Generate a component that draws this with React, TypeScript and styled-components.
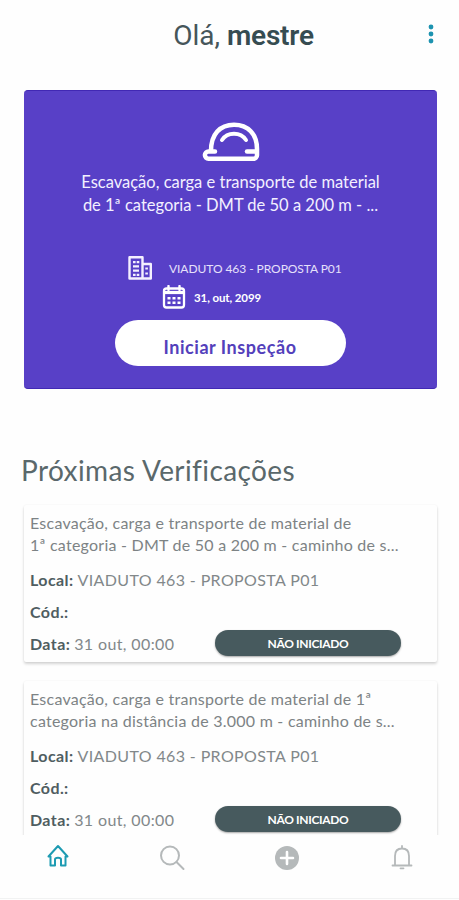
import React from "react";
import styled, { createGlobalStyle } from "styled-components";

const GlobalStyle = createGlobalStyle`
  * { box-sizing: border-box; }
  body { margin: 0; background: #fefefe; font-family: Lato, "Open Sans", sans-serif; }
`;

const Screen = styled.div`
  display: flex;
  flex-direction: column;
  width: 459px;
  height: 900px;
  overflow: hidden;
  background: #fefefe;
`;

const Header = styled.header`
  display: grid;
  grid-template-columns: 56px 1fr 56px;
  align-items: center;
  height: 90px;
  flex: none;
  padding-bottom: 22px;
`;

const Greeting = styled.h1`
  grid-column: 2;
  margin: 0;
  padding: 3px 0 0 28px;
  text-align: center;
  font: 400 28px/34px Roboto, sans-serif;
  color: #46565a;
  strong { font-weight: 600; color: #364c51; letter-spacing: -0.2px; }
`;

const MenuButton = styled.button`
  justify-self: center;
  display: flex;
  padding: 0;
  border: 0;
  background: none;
  svg { display: block; }
`;

const Hero = styled.section`
  display: flex;
  flex-direction: column;
  align-items: center;
  flex: none;
  height: 299px;
  margin: 0 22px 0 24px;
  padding-top: 31px;
  border-radius: 4px;
  background: #5840c7;
  border-top: 1px solid #4128b4;
  border-bottom: 1px solid #4128b4;
  color: #fff;
`;

const HeroText = styled.p`
  margin: 9px 0 0;
  text-align: center;
  font-size: 16.5px;
  line-height: 23px;
  color: #f3f0ff;
  white-space: pre;
`;

const MetaRow = styled.div<{ $left: number; $top: number; $gap: number }>`
  display: flex;
  align-items: center;
  align-self: flex-start;
  height: 24px;
  gap: ${(p) => p.$gap}px;
  margin: ${(p) => p.$top}px 0 0 ${(p) => p.$left}px;
`;

const Place = styled.span`
  font-size: 12px;
  letter-spacing: -0.06px;
  color: #e6e0fb;
`;

const DateText = styled.strong`
  font-size: 11.5px;
  letter-spacing: -0.1px;
`;

const StartButton = styled.button`
  width: 231px;
  height: 46px;
  margin: 11px 0 0 -1px;
  padding: 7px 0 0;
  border: 0;
  border-radius: 23px;
  background: #fff;
  color: #5340bb;
  font: 700 18px/22px Lato, sans-serif;
  letter-spacing: 0.55px;
`;

const SectionTitle = styled.h2`
  flex: none;
  margin: 63px 0 0 21px;
  font-size: 28px;
  line-height: 36px;
  font-weight: 400;
  letter-spacing: 0.4px;
  color: #5a686b;
`;

const List = styled.main`
  flex: none;
  display: flex;
  flex-direction: column;
  gap: 19px;
  height: 331px;
  margin-top: 16px;
  padding: 1px 22px 0 24px;
  overflow: hidden;
`;

const Card = styled.article`
  flex: none;
  height: 157px;
  padding: 7px 6px 0;
  border-radius: 2px;
  background: #fefefe;
  box-shadow: 0 2px 3px rgba(0, 0, 0, 0.17), 0 0 2px rgba(0, 0, 0, 0.05);
`;

const Description = styled.p`
  margin: 0 0 7px;
  font-size: 16px;
  line-height: 22px;
  letter-spacing: 0.24px;
  color: #7d8385;
  white-space: pre;
`;

const Field = styled.div`
  display: flex;
  align-items: center;
  height: 32px;
  font-size: 16px;
  letter-spacing: 0.38px;
  color: #82888a;
  white-space: pre;
  strong { color: #4f5d61; margin-right: 4px; letter-spacing: 0.4px; }
`;

const Status = styled.span`
  width: 186px;
  height: 26px;
  margin: 0 30px 0 auto;
  border-radius: 13px;
  background: #475a5e;
  box-shadow: 0 1px 2px rgba(0, 0, 0, 0.35);
  color: #fff;
  text-align: center;
  font-size: 12px;
  line-height: 27px;
  font-weight: 700;
  letter-spacing: -0.33px;
`;

const TabBar = styled.nav`
  flex: none;
  display: grid;
  grid-template-columns: repeat(4, 1fr);
  height: 64px;
  padding-top: 8px;
  background: #fefefe;
  border-bottom: 1px solid #f1f2f2;
`;

const Tab = styled.a<{ $active?: boolean }>`
  display: flex;
  justify-content: center;
  height: 28px;
  color: ${(p) => (p.$active ? "#1d9bb2" : "#b5b9ba")};
  svg { display: block; }
`;

const checks = [
  { text: "Escavação, carga e transporte de material de\n1ª categoria - DMT de 50 a 200 m - caminho de s..." },
  { text: "Escavação, carga e transporte de material de 1ª\ncategoria na distância de 3.000 m - caminho de s..." },
];

export default function App() {
  return (
    <Screen>
      <GlobalStyle />
      <Header>
        <Greeting>Olá, <strong>mestre</strong></Greeting>
        <MenuButton aria-label="Menu">
          <svg width="8" height="20" viewBox="0 0 8 20" fill="#1d93b0">
            <circle cx="4" cy="3" r="2.4" /><circle cx="4" cy="10" r="2.4" /><circle cx="4" cy="17" r="2.4" />
          </svg>
        </MenuButton>
      </Header>

      <Hero>
        <svg width="58" height="40" viewBox="0 0 58 40" fill="none" stroke="#fff" strokeWidth="4.5" strokeLinecap="round" strokeLinejoin="round">
          <path d="M13 29.500H6.500a3.600 3.600 0 0 0 0 7.200H51.500a3.500 3.500 0 0 0 3.500-3.500V27C55 12 46 2.700 32 2.700S9 12 9 29" />
          <path d="M45 29.500h9" />
          <path d="M20 18C25.500 9.700 38.500 9.700 44 18" strokeWidth="4" />
        </svg>
        <HeroText>{"Escavação, carga e transporte de material\nde 1ª categoria - DMT de 50 a 200 m - ..."}</HeroText>
        <MetaRow $left={104} $top={39} $gap={17}>
          <svg width="24" height="24" viewBox="0 0 24 24" fill="none" stroke="#f4f0ff" strokeWidth="2.4" strokeLinejoin="round">
            <path d="M1.500 22.500V1.300h13v21.200zM14.500 8h8.300v14.500h-8.300" />
            <path d="M5 6.200h2.600M8.700 6.200h2.600M5 10.400h6M5 14.600h6M5 18.800h2.600M8.700 18.800h2.600M17.300 12.500h2.600M17.300 17.500h2.600" strokeWidth="2.200" />
          </svg>
          <Place>VIADUTO 463 - PROPOSTA P01</Place>
        </MetaRow>
        <MetaRow $left={138} $top={5} $gap={8}>
          <svg width="24" height="24" viewBox="0 0 24 24" fill="none" stroke="#fff">
            <rect x="2" y="3.500" width="20" height="19" rx="2.500" strokeWidth="2.300" />
            <path d="M6.500 1v4M17.500 1v4" strokeWidth="2.400" strokeLinecap="round" />
            <path d="M2 7.500h20" strokeWidth="3.200" />
            <path d="M5.500 13.200h3M10.500 13.200h3M15.500 13.200h3M5.500 17.700h3M10.500 17.700h3M15.500 17.700h3" strokeWidth="2.600" />
          </svg>
          <DateText>31, out, 2099</DateText>
        </MetaRow>
        <StartButton>Iniciar Inspeção</StartButton>
      </Hero>

      <SectionTitle>Próximas Verificações</SectionTitle>
      <List>
        {checks.map((c) => (
          <Card key={c.text}>
            <Description>{c.text}</Description>
            <Field><strong>Local:</strong>VIADUTO 463 - PROPOSTA P01</Field>
            <Field><strong>Cód.:</strong></Field>
            <Field><strong>Data:</strong>31 out, 00:00<Status>NÃO INICIADO</Status></Field>
          </Card>
        ))}
      </List>

      <TabBar>
        <Tab $active aria-label="Início">
          <svg width="23" height="26" viewBox="0 0 23 26" fill="none" stroke="currentColor" strokeWidth="2" strokeLinejoin="round" strokeLinecap="round">
            <path d="M4.500 13.500H2.500L12 3l9.500 10.500H19.500V22.500H15V16.500c0-2.200-6-2.200-6 0v6H4.500z" />
          </svg>
        </Tab>
        <Tab aria-label="Buscar">
          <svg width="26" height="28" viewBox="0 0 26 28" fill="none" stroke="currentColor" strokeWidth="2" strokeLinecap="round">
            <circle cx="11" cy="12.500" r="9" /><path d="m17.500 19 7 7" />
          </svg>
        </Tab>
        <Tab aria-label="Adicionar">
          <svg width="24" height="28" viewBox="0 0 24 28">
            <circle cx="12" cy="15" r="12" fill="currentColor" />
            <path d="M12 9v12M6 15h12" stroke="#fff" strokeWidth="2.600" strokeLinecap="round" />
          </svg>
        </Tab>
        <Tab aria-label="Notificações">
          <svg width="22" height="28" viewBox="0 0 22 28" fill="none" stroke="currentColor" strokeWidth="1.800" strokeLinecap="round" strokeLinejoin="round">
            <path d="M1.500 22.500h19M4 22V13C4 8 7 5.500 11 5.500S18 8 18 13v9M11 3v2M9.500 25.300h3" />
          </svg>
        </Tab>
      </TabBar>
    </Screen>
  );
}
